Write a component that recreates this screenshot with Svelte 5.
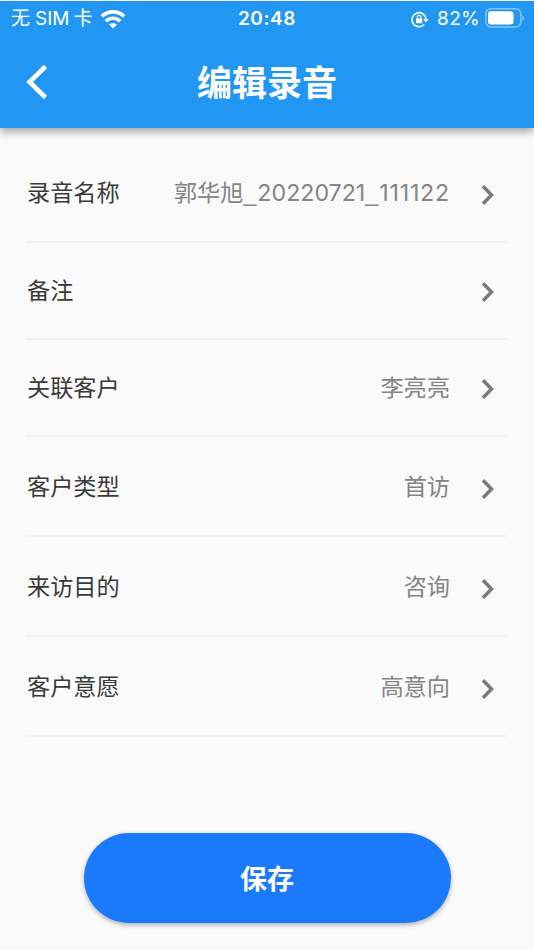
<script lang="ts">
	interface Field {
		label: string
		value: string
		stamp?: string[]
		tall: boolean
	}

	const fields: Field[] = [
		{ label: '录音名称', value: '郭华旭', stamp: ['20220721', '111122'], tall: true },
		{ label: '备注', value: '', tall: false },
		{ label: '关联客户', value: '李亮亮', tall: false },
		{ label: '客户类型', value: '首访', tall: true },
		{ label: '来访目的', value: '咨询', tall: true },
		{ label: '客户意愿', value: '高意向', tall: true }
	]
</script>

<div class="screen">
	<header>
		<div class="status">
			<div class="carrier">
				<span>无</span><span class="sim">SIM</span><span>卡</span>
				<svg class="wifi" width="26" height="20" viewBox="0 0 26 20">
					<g fill="none" stroke="#fff" stroke-width="3.7">
						<path d="M1.9 7.5a15.8 15.8 0 0 1 22.2 0" />
						<path d="M5.9 12.2a10 10 0 0 1 14.2 0" />
					</g>
					<path d="M9 15.6a5.8 5.8 0 0 1 8 0L13 19.6z" fill="#fff" />
				</svg>
			</div>
			<span class="time">20:48</span>
			<div class="power">
				<svg width="18" height="17" viewBox="0 0 18 17">
					<path d="M13.1 13.5A7 7 0 1 1 15 8.6" fill="none" stroke="#fff" stroke-width="1.6" />
					<path d="M12.3 7.9h5.2l-2.6 3.5z" fill="#fff" />
					<rect x="5" y="7.4" width="6.2" height="4.8" rx="0.8" fill="#fff" />
					<path d="M6.3 7.8V6.2a1.8 1.8 0 0 1 3.6 0v1.6" fill="none" stroke="#fff" stroke-width="1.2" />
				</svg>
				<span class="percent">82%</span>
				<svg class="battery" width="40" height="20" viewBox="0 0 40 20">
					<rect x="0.8" y="0.8" width="35" height="18.2" rx="5" fill="none" stroke="#fff" stroke-opacity="0.45" stroke-width="1.5" />
					<rect x="3" y="3.2" width="25.5" height="13.4" rx="3" fill="#fff" />
					<path d="M37.5 7v6q1.4-1 1.4-3t-1.4-3z" fill="#fff" fill-opacity="0.5" />
				</svg>
			</div>
		</div>
		<div class="bar">
			<button class="back" aria-label="返回">
				<svg width="24" height="36" viewBox="0 0 24 36">
					<path d="M20.5 2.5 4.5 18l16 15.5" fill="none" stroke="#fff" stroke-width="4.6" />
				</svg>
			</button>
			<h1>编辑录音</h1>
		</div>
	</header>

	<main>
		{#each fields as field}
			<div class="row" class:tall={field.tall}>
				<span class="label">{field.label}</span>
				<span class="value"
					>{field.value}{#each field.stamp ?? [] as part}<span class="underscore">_</span><span class="stamp"
							>{part}</span
						>{/each}</span
				>
				<svg class="chevron" width="14" height="22" viewBox="0 0 14 22">
					<path d="M2 2.3 10.5 11 2 19.7" fill="none" stroke="#7b7b7b" stroke-width="3.5" />
				</svg>
			</div>
		{/each}
		<button class="save">保存</button>
	</main>
</div>

<style>
	:global(body) {
		background: #fafafa;
	}

	.screen {
		box-sizing: border-box;
		height: 950px;
		overflow: hidden;
		border-top: 1px solid #fafafa;
		background: #fafafa;
		font-family: Inter, 'Noto Sans CJK SC', sans-serif;
	}

	button {
		padding: 0;
		border: none;
		font: inherit;
		color: #fff;
	}

	header {
		height: 127px;
		background: #2196f3;
		box-shadow: 0 3px 9px rgba(0, 0, 0, 0.4);
		color: #fff;
	}

	.status {
		display: grid;
		grid-template-columns: 1fr auto 1fr;
		align-items: center;
		height: 35px;
		padding: 0 9px 0 11px;
		font-size: 19px;
		line-height: 36px;
	}

	.carrier,
	.power {
		display: flex;
		align-items: center;
	}

	.sim {
		margin: 0 4px 0 5px;
	}

	.wifi {
		margin: 0 0 1px 7px;
	}

	.time {
		margin-right: 2px;
		font-weight: 600;
		letter-spacing: 0.6px;
	}

	.power {
		justify-content: flex-end;
	}

	.percent {
		margin: 0 5px 0 8px;
		letter-spacing: 0.3px;
	}

	.battery {
		margin-bottom: 2px;
	}

	.bar {
		display: grid;
		grid-template-columns: 80px 1fr 80px;
		align-items: center;
		height: 92px;
	}

	.back {
		display: flex;
		padding-left: 25px;
		background: none;
	}

	h1 {
		margin: 0;
		padding-top: 2px;
		font-size: 35px;
		font-weight: 700;
		line-height: 90px;
		text-align: center;
	}

	main {
		display: flex;
		flex-direction: column;
		padding: 15px 27px 0 26px;
	}

	.row {
		box-sizing: border-box;
		display: flex;
		align-items: center;
		height: 97px;
		padding-left: 1px;
		border-bottom: 2px solid #f2f2f2;
		font-size: 23.2px;
		line-height: 34px;
	}

	.row.tall {
		height: 100px;
	}

	.label {
		margin-top: 1px;
		color: #3a3a3a;
	}

	.value {
		flex: 1;
		margin-top: 1px;
		color: #858585;
		text-align: right;
	}

	.underscore {
		margin-right: 1px;
		font-family: 'Liberation Sans', sans-serif;
	}

	.stamp:last-child {
		letter-spacing: 0.8px;
	}

	.chevron {
		margin: 3px 12px 0 31px;
	}

	.tall .chevron {
		margin-top: 6px;
	}

	.save {
		align-self: center;
		width: 367px;
		height: 90px;
		margin: 96px 0 0 1px;
		padding-bottom: 2px;
		border-radius: 45px;
		background: #1b7afc;
		box-shadow: 0 2px 5px rgba(0, 0, 0, 0.3);
		font-size: 27px;
		font-weight: 700;
	}
</style>
